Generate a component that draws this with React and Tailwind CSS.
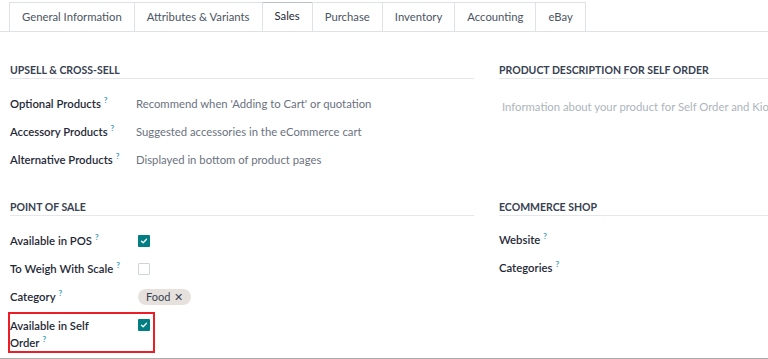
import React from "react"

const tabs = ["General Information", "Attributes & Variants", "Sales", "Purchase", "Inventory", "Accounting", "eBay"]

function Q() {
  return <sup className="ml-[3px] text-[8px] font-bold text-[#3d9dbd] top-[-5px]">?</sup>
}

function Heading({ children }) {
  return (
    <div className="h-[17px] border-b border-[#e5e7eb] text-[10.5px] font-bold uppercase leading-[16px] text-[#374151]">
      {children}
    </div>
  )
}

function Check({ on }) {
  return on ? (
    <span className="flex h-[12px] w-[12px] items-center justify-center rounded-[1px] bg-[#017e84]">
      <svg width="8" height="8" viewBox="0 0 8 8" fill="none">
        <path d="M1.5 4.2L3.2 5.8L6.5 2.3" stroke="white" strokeWidth="1.3" strokeLinecap="round" strokeLinejoin="round" />
      </svg>
    </span>
  ) : (
    <span className="block h-[12px] w-[12px] rounded-[1px] border border-[#cfd4da] bg-white" />
  )
}

function Row({ label, children }) {
  return (
    <div className="flex h-[28px] items-center">
      <div className="w-[126px] shrink-0 font-semibold text-[#1f2937]">
        {label}
        <Q />
      </div>
      <div className="flex items-center text-[#6b7280]">{children}</div>
    </div>
  )
}

export default function App() {
  return (
    <div
      className="relative h-[359px] w-[768px] overflow-hidden border-b border-[#acacac] bg-white text-[11.3px]"
      style={{ fontFamily: "Lato, 'Open Sans', sans-serif" }}
    >
      <div className="flex border-b border-[#dee2e6] pl-[10px] pt-[2px]">
        {tabs.map((t) => (
          <div
            key={t}
            className={
              t === "Sales"
                ? "-mb-px -ml-px flex h-[29px] items-center border border-b-white border-[#dee2e6] border-t-[#b8c2cc] bg-white px-[12px] text-[#1f2937]"
                : "-ml-px flex h-[29px] items-center border border-b-0 border-[#dee2e6] bg-white px-[12px] text-[#4b5563]"
            }
          >
            {t}
          </div>
        ))}
      </div>

      <div className="flex gap-[25px] px-[10px]">
        <div className="w-[464px] shrink-0">
          <div className="mt-[30px]">
            <Heading>Upsell &amp; Cross-Sell</Heading>
          </div>
          <div className="mt-[11px]">
            <Row label="Optional Products">Recommend when 'Adding to Cart' or quotation</Row>
            <Row label="Accessory Products">Suggested accessories in the eCommerce cart</Row>
            <Row label="Alternative Products">Displayed in bottom of product pages</Row>
          </div>

          <div className="mt-[25px]">
            <Heading>Point of Sale</Heading>
          </div>
          <div className="mt-[11px]">
            <Row label="Available in POS">
              <span className="ml-[2px]">
                <Check on />
              </span>
            </Row>
            <Row label="To Weigh With Scale">
              <span className="ml-[2px]">
                <Check />
              </span>
            </Row>
            <Row label="Category">
              <span className="ml-[2px] flex h-[16px] items-center rounded-full bg-[#e7e1de] px-[8px] text-[11px] text-[#374151]">
                Food <span className="ml-[4px] text-[11px]">✕</span>
              </span>
            </Row>
            <div className="relative flex pt-[6px]">
              <div className="w-[126px] shrink-0 font-semibold leading-[17px] text-[#1f2937]">
                Available in Self
                <br />
                Order
                <Q />
              </div>
              <span className="ml-[2px] mt-[2px]">
                <Check on />
              </span>
              <span className="absolute left-[-2px] top-[1px] h-[41px] w-[147px] border-2 border-[#ee1c24]" />
            </div>
          </div>
        </div>

        <div className="w-[464px] shrink-0">
          <div className="mt-[30px]">
            <Heading>Product Description for Self Order</Heading>
          </div>
          <div className="mt-[20px] pl-[3px] text-[#adb5bd]">
            Information about your product for Self Order and Kiosk
          </div>

          <div className="mt-[83px]">
            <Heading>eCommerce Shop</Heading>
          </div>
          <div className="mt-[11px]">
            <div className="flex h-[28px] items-center font-semibold text-[#1f2937]">
              Website
              <Q />
            </div>
            <div className="flex h-[28px] items-center font-semibold text-[#1f2937]">
              Categories
              <Q />
            </div>
          </div>
        </div>
      </div>
    </div>
  )
}
